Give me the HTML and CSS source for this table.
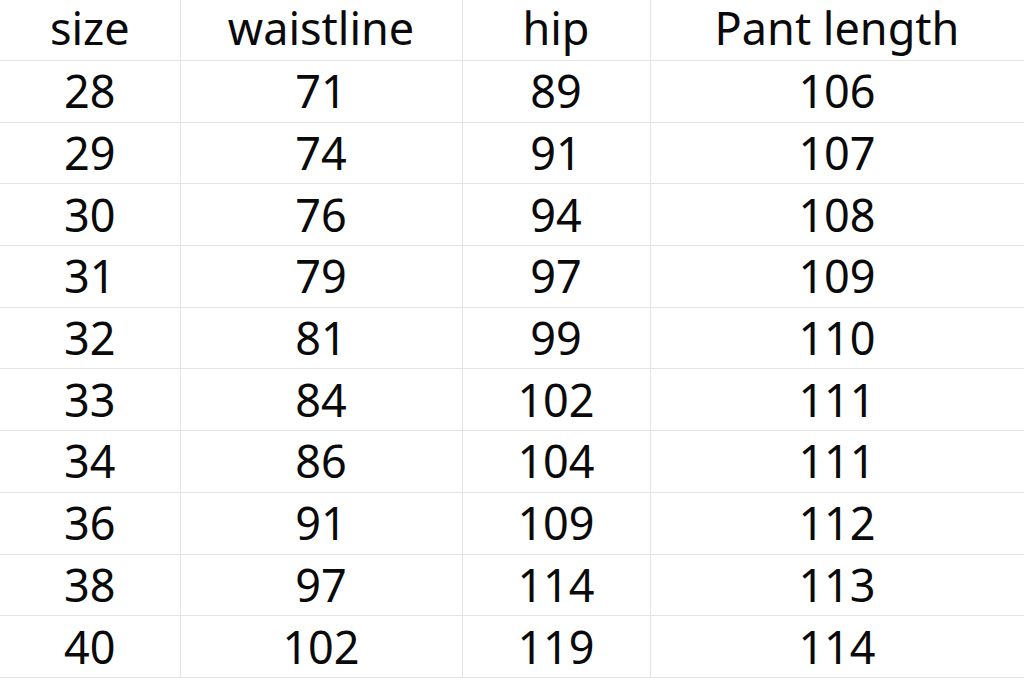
FILE: index.html
```html
<!DOCTYPE html>
<html>
<head>
<meta charset="utf-8">
<link rel="stylesheet" href="styles.css">
</head>
<body>
<table class="sizes">
  <colgroup><col class="c1"><col class="c2"><col class="c3"><col class="c4"></colgroup>
  <thead>
    <tr class="head"><th>size</th><th>waistline</th><th>hip</th><th>Pant length</th></tr>
  </thead>
  <tbody>
    <tr><td>28</td><td>71</td><td>89</td><td>106</td></tr>
    <tr><td>29</td><td>74</td><td>91</td><td>107</td></tr>
    <tr><td>30</td><td>76</td><td>94</td><td>108</td></tr>
    <tr><td>31</td><td>79</td><td>97</td><td>109</td></tr>
    <tr><td>32</td><td>81</td><td>99</td><td>110</td></tr>
    <tr><td>33</td><td>84</td><td>102</td><td>111</td></tr>
    <tr><td>34</td><td>86</td><td>104</td><td>111</td></tr>
    <tr><td>36</td><td>91</td><td>109</td><td>112</td></tr>
    <tr><td>38</td><td>97</td><td>114</td><td>113</td></tr>
    <tr><td>40</td><td>102</td><td>119</td><td>114</td></tr>
  </tbody>
</table>
</body>
</html>
```
FILE: styles.css
```css
html, body {
  margin: 0;
  padding: 0;
  background: #ffffff;
}
body {
  width: 1024px;
  height: 683px;
  overflow: hidden;
  font-family: "Noto Sans", "Open Sans", sans-serif;
  color: #0a0a0a;
}
.sizes {
  width: 1024px;
  border-collapse: collapse;
  table-layout: fixed;
}
.c1 { width: 180px; }
.c2 { width: 282px; }
.c3 { width: 188px; }
.c4 { width: 374px; }
.sizes th, .sizes td {
  border: 1px solid #e4e4e4;
  text-align: center;
  vertical-align: middle;
  padding: 0;
  font-size: 45px;
  font-weight: 400;
  line-height: 1.2;
  height: 60.7px;
}
.sizes th:first-child, .sizes td:first-child { border-left: none; }
.sizes th:last-child, .sizes td:last-child { border-right: 1px solid #f0f0f0; }
.head th {
  border-top: none;
  height: 56px;
  padding-bottom: 4px;
}
```
